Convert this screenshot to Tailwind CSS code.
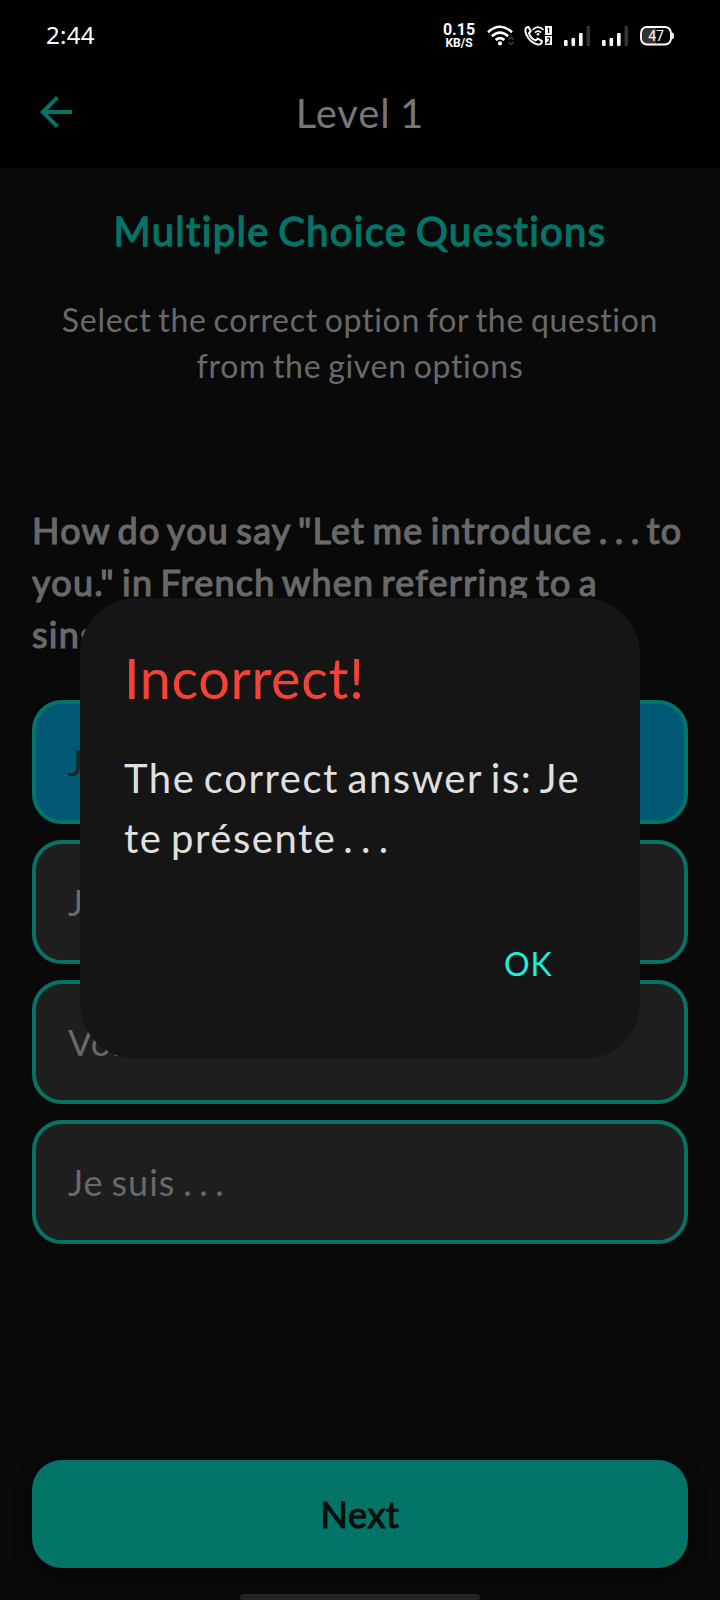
<!DOCTYPE html>
<html lang="en">
<head>
<meta charset="utf-8">
<title>Level 1</title>
<script src="https://cdn.jsdelivr.net/npm/@tailwindcss/browser@4"></script>
</head>
<body class="bg-black">
<div class="relative flex h-[1600px] w-[720px] flex-col overflow-hidden bg-[#090909] font-['Lato',sans-serif] [font-variant-ligatures:none]">
  <div class="flex h-[72px] shrink-0 items-center justify-between bg-black pr-[46px] pl-[46px] text-white">
    <span class="pb-[2px] font-['Noto_Sans',sans-serif] text-[24px] leading-[70px] tracking-[0.3px]">2:44</span>
    <div class="flex items-center">
      <div class="flex w-[32px] flex-col items-center font-['Roboto',sans-serif] font-bold">
        <span class="text-[16px] leading-[14px]">0.15</span>
        <span class="text-[12px] leading-[12px]">KB/S</span>
      </div>
      <svg class="ml-[12px]" width="28" height="22" viewBox="0 0 28 22" fill="none" stroke="#fff" stroke-width="2.5"><path d="M1 7.200Q13 -3.600 25 7.200M4.800 11.200Q13 4 21.200 11.200M8.600 15Q13 11.200 17.400 15"/><circle cx="13" cy="18.400" r="2.100" fill="#fff" stroke="none"/><path d="M21.500 14.500l2.500-2.500 2.500 2.500M21.500 17l2.500 2.500 2.500-2.500" stroke="#333" stroke-width="1.800"/></svg>
      <svg class="ml-[9px]" width="29" height="22" viewBox="0 0 29 22" fill="none" stroke="#fff" stroke-width="2"><path d="M2.200 2.600L4.400 2 6.800 6 5 8.200C6 11.600 8.400 14 11.600 15.400L13.800 13.600 18 16 17.200 18.400C15.500 20 13 19.800 10 18.200 5.600 16 2 10.500 1.400 6.500 1.200 4.500 1.400 3.400 2.200 2.600Z" stroke-linejoin="round"/><path d="M8.500 4.800Q14 -0.500 19.500 4.800M11 7.600Q14 4.800 17 7.600" stroke-width="1.700"/><circle cx="14" cy="9.300" r="1.300" fill="#fff" stroke="none"/><path d="M21 1h7v9h-7zM21 11h7v9h-7z" fill="#fff" stroke="none"/><path d="M23.600 3.300h1v4.700M23 13.200h2.600v2.200L23.200 17.800h2.800" stroke="#000" stroke-width="1.200"/></svg>
      <svg class="ml-[11px]" width="28" height="20" viewBox="0 0 28 20" fill="#fff"><rect y="14" width="3.600" height="6" rx="1"/><rect x="7.500" y="12" width="3.600" height="8" rx="1"/><rect x="15" y="7" width="3.600" height="13" rx="1"/><rect x="22.500" width="3.600" height="20" rx="1" fill="#333"/></svg>
      <svg class="ml-[10px]" width="28" height="20" viewBox="0 0 28 20" fill="#fff"><rect y="14" width="3.600" height="6" rx="1"/><rect x="7.500" y="12" width="3.600" height="8" rx="1"/><rect x="15" y="7" width="3.600" height="13" rx="1"/><rect x="22.500" width="3.600" height="20" rx="1" fill="#333"/></svg>
      <svg class="ml-[10px]" width="34" height="20" viewBox="0 0 34 20"><path d="M8 2h8v16H8a6 6 0 0 1-6-6V8a6 6 0 0 1 6-6z" fill="#333"/><rect x="1" y="1" width="30" height="17.500" rx="6" fill="none" stroke="#fff" stroke-width="1.900"/><path d="M32 6.500q1.800 0 1.800 1.500v3.500q0 1.500-1.800 1.500z" fill="#fff"/><text x="16" y="14.700" text-anchor="middle" fill="#fff" font-family="Roboto" font-size="14">47</text></svg>
    </div>
  </div>
  <header class="grid h-[96px] shrink-0 grid-cols-[40px_1fr_40px] items-center bg-black px-[40px] pb-[15px]">
    <svg class="-mt-px" width="32" height="32" viewBox="4 4 16 16" fill="#027568"><path d="M20 11H7.830l5.590-5.590L12 4l-8 8 8 8 1.410-1.410L7.830 13H20v-2z"/></svg>
    <h1 class="text-center text-[40px] leading-[48px] tracking-[0.9px] [word-spacing:-1.7px] text-[#777]">Level 1</h1>
  </header>
  <main class="flex flex-1 flex-col px-8">
    <h2 class="mt-[39px] text-center text-[40px] leading-[48px] tracking-[1.32px] [word-spacing:-3px] whitespace-nowrap text-[#027568] [-webkit-text-stroke:1.3px_#027568]">Multiple Choice Questions</h2>
    <p class="mt-[42px] text-center text-[32px] leading-[46px] tracking-[0.7px] [word-spacing:-2px] whitespace-nowrap text-[#696969]">Select the correct option for the question<br>from the given options</p>
    <p class="mt-[115px] text-[36px] leading-[52px] tracking-[1.25px] [word-spacing:-3.3px] whitespace-nowrap text-[#696969] [-webkit-text-stroke:1.2px_#696969]">How do you say "Let me introduce<span class="tracking-[1px] [word-spacing:-3.7px]"> . . . </span>to<br>you." in French when referring to a<br>singular person?</p>
    <div class="mt-[40px] flex flex-col gap-4 text-[36px] tracking-[1px] [word-spacing:-2.3px] text-[#696969]">
      <div class="flex h-[124px] items-center rounded-[30px] border-4 border-[#027568] bg-[#005874] px-8 text-[#222]"><p>Je suis</p></div>
      <div class="flex h-[124px] items-center rounded-[30px] border-4 border-[#087266] bg-[#1e1e1e] px-8"><p>Je te présente</p></div>
      <div class="flex h-[124px] items-center rounded-[30px] border-4 border-[#087266] bg-[#1e1e1e] px-8"><p>Voici <span class="[word-spacing:-3.7px]">. . .</span></p></div>
      <div class="flex h-[124px] items-center rounded-[30px] border-4 border-[#087266] bg-[#1e1e1e] px-8"><p>Je suis <span class="[word-spacing:-3.7px]">. . .</span></p></div>
    </div>
    <button class="mt-auto mb-8 h-[108px] rounded-[30px] bg-[#027568] text-[36px] tracking-[0.6px] text-[#090f0e] shadow-[0_8px_20px_rgba(0,0,0,0.35)] [-webkit-text-stroke:1.2px_#090f0e]">Next</button>
  </main>
  <div class="absolute bottom-0 left-[240px] h-[6px] w-[240px] rounded-full bg-[#242424]"></div>
  <div class="absolute inset-0 flex items-center justify-center pt-[56px]">
    <div role="dialog" class="flex h-[461px] w-[560px] flex-col rounded-[56px] bg-[#151515] px-[44px] pt-[46px]">
      <h3 class="text-[56px] leading-[67px] tracking-[0.5px] text-[#f44336]">Incorrect!</h3>
      <p class="mt-[37px] text-[40px] leading-[60px] tracking-[1.55px] [word-spacing:-3.3px] whitespace-nowrap text-[#e0e0e0]">The correct answer is: Je<br>te présente<span class="[word-spacing:-5px]"> . . .</span></p>
      <button class="mt-[76px] mr-[43.500px] self-end text-[32px] leading-[40px] tracking-[0.8px] text-[#1deedb]">OK</button>
    </div>
  </div>
</div>
</body>
</html>
